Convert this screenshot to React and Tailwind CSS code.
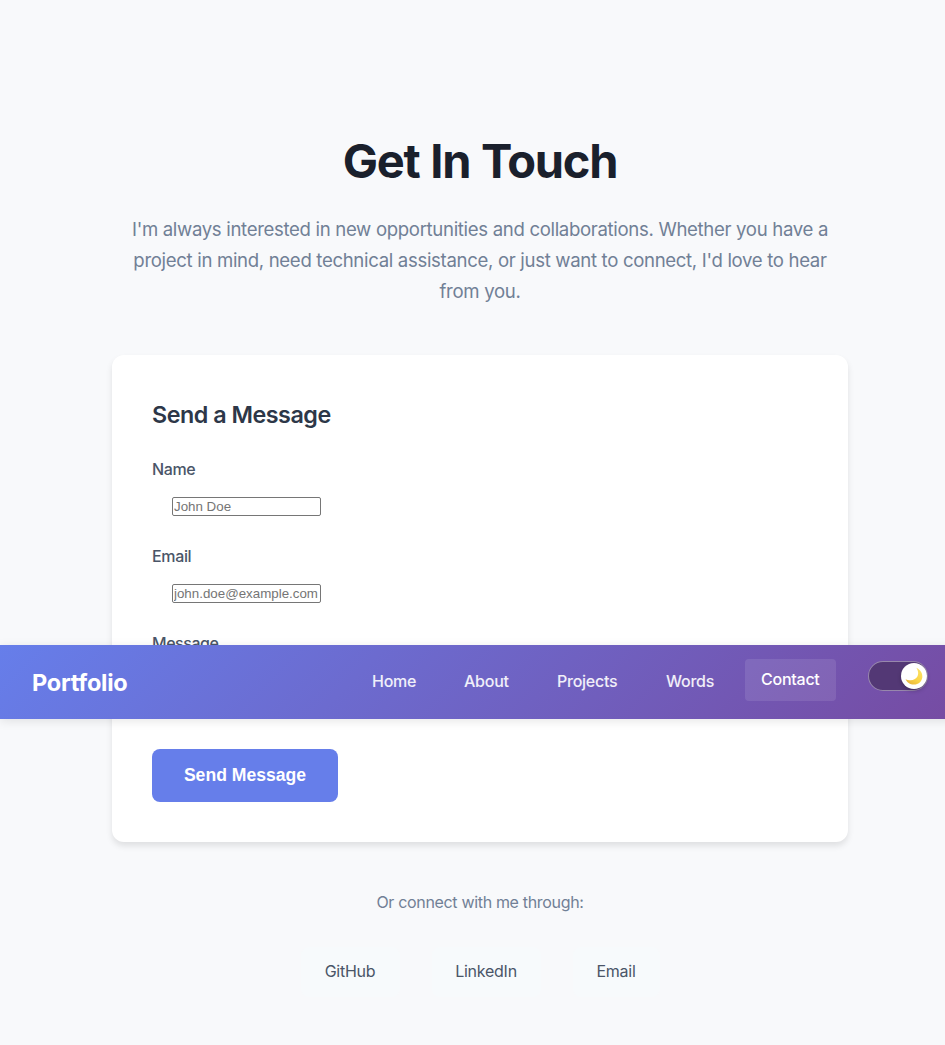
import React from "react";

function Moon() {
  return (
    <svg width="18" height="18" viewBox="0 0 18 18">
      <defs>
        <linearGradient id="moon" x1="1" y1="0" x2="0.2" y2="1">
          <stop offset="0" stopColor="#fbe36c" />
          <stop offset="0.6" stopColor="#fbd548" />
          <stop offset="1" stopColor="#e9b53c" />
        </linearGradient>
      </defs>
      <path d="M11.3 0.7 C15.2 2.4 17.9 6.3 17.3 10.4 C16.6 15 12.8 17.7 8.9 17.5 C5 17.4 1.7 15.2 0.6 11.9 C3.3 13.7 7.1 13.9 9.9 12.1 C13.8 9.6 14.2 4.8 11.3 0.7 Z" fill="url(#moon)" />
    </svg>
  );
}

function NavLink({ children, className }) {
  return <a className={`block h-[42px] px-4 text-[16px] leading-[40px] font-medium tracking-[-0.25px] whitespace-nowrap ${className}`}>{children}</a>;
}

function Navbar() {
  return (
    <nav className="absolute top-[645px] left-0 z-10 flex h-[74px] w-[960px] items-center bg-[linear-gradient(135deg,#667eea_0%,#764ba2_100%)] pl-8 shadow-[0_2px_10px_rgba(0,0,0,0.1)]">
      <span className="w-[324px] pt-0.5 text-[23.5px] leading-9 font-bold tracking-[-0.25px] text-white">Portfolio</span>
      <div className="flex h-[46px] items-start gap-4">
        <NavLink className="mt-0.5 w-[76px] text-white/90">Home</NavLink>
        <NavLink className="mt-0.5 w-[77px] text-white/90">About</NavLink>
        <NavLink className="mt-0.5 w-[93px] text-white/90">Projects</NavLink>
        <NavLink className="mt-0.5 w-[79px] text-white/90">Words</NavLink>
        <NavLink className="w-[91px] rounded-[4px] bg-white/10 text-white">Contact</NavLink>
      </div>
      <button className="mb-3 ml-8 flex h-[30px] w-[60px] items-center justify-end rounded-full border border-white/40 bg-[#533875]">
        <span className="flex h-[26px] w-[26px] items-center justify-center rounded-full bg-white shadow-[0_2px_4px_rgba(0,0,0,0.2)]">
          <Moon />
        </span>
      </button>
    </nav>
  );
}

function Field({ label, placeholder }) {
  return (
    <div className="mb-6 h-[63px]">
      <label className="block text-[16px] leading-[26px] font-medium tracking-[-0.35px] text-[#4a5568]">{label}</label>
      <input
        placeholder={placeholder}
        className="mt-[15px] ml-5 block h-[19px] w-[149px] rounded-[2px] border border-[#767676] bg-white px-px font-['Liberation_Sans',Arial,sans-serif] text-[13.333px] leading-[15px] placeholder:text-[#757575]"
      />
    </div>
  );
}

export default function App() {
  return (
    <div className="relative h-[1045px] w-full overflow-hidden bg-[#f8f9fb] font-['Inter',sans-serif]">
      <main className="flex w-[960px] flex-col items-center pt-[122px]">
        <h1 className="text-[47px] leading-[77px] font-bold tracking-[-1.3px] [word-spacing:1px] whitespace-nowrap text-[#1a202c]">Get In Touch</h1>
        <p className="mt-[15px] text-center text-[18.6px] leading-[31px] tracking-[-0.33px] whitespace-nowrap text-[#718096]">
          <span className="block">I'm always interested in new opportunities and collaborations. Whether you have a</span>
          <span className="block">project in mind, need technical assistance, or just want to connect, I'd love to hear</span>
          <span className="block">from you.</span>
        </p>
        <section className="mt-12 h-[487px] w-[736px] rounded-xl bg-white p-10 shadow-[0_4px_6px_rgba(0,0,0,0.1)]">
          <h2 className="mb-[22px] text-[23.3px] leading-[39px] font-semibold tracking-[-0.48px] text-[#2d3748]">Send a Message</h2>
          <Field label="Name" placeholder="John Doe" />
          <Field label="Email" placeholder="john.doe@example.com" />
          <div className="h-[119px]">
            <label className="block text-[16px] leading-[26px] font-medium tracking-[-0.45px] text-[#4a5568]">Message</label>
          </div>
          <button className="h-[53px] w-[186px] rounded-lg bg-[#667eea] font-['Liberation_Sans',Arial,sans-serif] text-[17.6px] font-bold text-white">Send Message</button>
        </section>
        <p className="mt-[47px] text-[16px] leading-[26px] tracking-[-0.33px] text-[#718096]">Or connect with me through:</p>
        <div className="mt-8 flex gap-8 text-center text-[16px] leading-[26px] tracking-[-0.25px] text-[#4a5568]">
          <a className="w-[99px] rounded-lg bg-[#f7fafc] pt-[11px] pb-[13px]">GitHub</a>
          <a className="w-[109px] rounded-lg bg-[#f7fafc] pt-[11px] pb-[13px]">LinkedIn</a>
          <a className="w-[87px] rounded-lg bg-[#f7fafc] pt-[11px] pb-[13px]">Email</a>
        </div>
      </main>
      <Navbar />
    </div>
  );
}
